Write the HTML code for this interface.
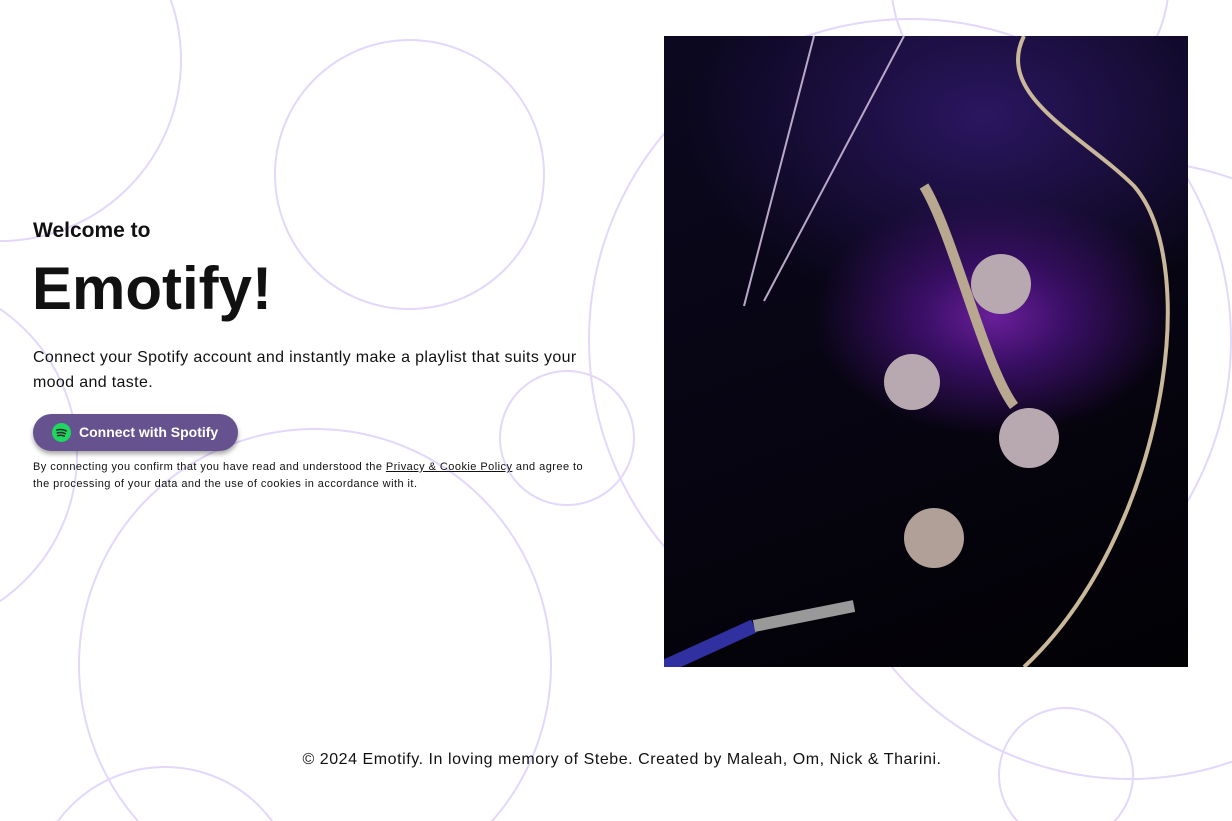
<!DOCTYPE html>
<html><head><meta charset="utf-8"><style>
html,body{margin:0;padding:0;width:1232px;height:821px;overflow:hidden;background:#fff;font-family:"Liberation Sans",sans-serif;color:#111;}
#w{position:relative;width:1232px;height:821px;overflow:hidden;}
.c{position:absolute;border:2px solid #e3d7fb;border-radius:50%;box-sizing:border-box;}
.abs{position:absolute;}
</style></head><body><div id="w">
<div class="c" style="left:-182px;top:-122px;width:364px;height:364px"></div>
<div class="c" style="left:274px;top:39px;width:271px;height:271px"></div>
<div class="c" style="left:499px;top:370px;width:136px;height:136px"></div>
<div class="c" style="left:78px;top:428px;width:474px;height:474px"></div>
<div class="c" style="left:-278px;top:277px;width:356px;height:356px"></div>
<div class="c" style="left:31px;top:766px;width:268px;height:268px"></div>
<div class="c" style="left:588px;top:18px;width:644px;height:644px"></div>
<div class="c" style="left:820px;top:160px;width:620px;height:620px"></div>
<div class="c" style="left:890px;top:-160px;width:280px;height:280px"></div>
<div class="c" style="left:998px;top:707px;width:136px;height:136px"></div>

<div class="abs" style="left:33px;top:219px;font-size:21px;font-weight:bold;">Welcome to</div>
<div class="abs" style="left:32px;top:254px;font-size:60px;font-weight:bold;">Emotify!</div>
<div class="abs" style="left:33px;top:345px;width:570px;font-size:16px;line-height:25px;letter-spacing:0.35px;">Connect your Spotify account and instantly make a playlist that suits your mood and taste.</div>
<div class="abs" style="left:33px;top:414px;width:205px;height:37px;border-radius:19px;background:#65528f;box-shadow:0 3px 5px rgba(0,0,0,.35);color:#fff;font-weight:bold;font-size:14px;line-height:37px;">
<svg style="position:absolute;left:19px;top:9px" width="19" height="19" viewBox="0 0 20 20"><circle cx="10" cy="10" r="10" fill="#1ed760"/><path d="M5 7.5q5-1.6 10 .8M5.5 10.5q4.5-1.3 8.5.7M6 13.3q3.7-1 7 .5" stroke="#2a2a2a" stroke-width="1.6" fill="none" stroke-linecap="round"/></svg>
<span style="position:absolute;left:46px">Connect with Spotify</span></div>
<div class="abs" style="left:33px;top:459px;width:565px;font-size:11px;line-height:16.5px;letter-spacing:0.45px;">By connecting you confirm that you have read and understood the <u>Privacy &amp; Cookie Policy</u> and agree to the processing of your data and the use of cookies in accordance with it.</div>

<div class="abs" style="left:664px;top:36px;width:524px;height:631px;background:radial-gradient(ellipse 180px 120px at 330px 280px,#6a1f9a 0%,#3a0f66 40%,transparent 100%),radial-gradient(ellipse 300px 200px at 320px 80px,#2a1660,transparent),linear-gradient(160deg,#0c0820 0%,#070512 50%,#020104 100%);overflow:hidden">
<svg width="524" height="631" style="position:absolute;left:0;top:0">
<path d="M360 0 C330 60 420 100 470 150 C540 230 500 500 360 631" stroke="#c9b89a" stroke-width="4" fill="none"/>
<path d="M150 0 L80 270" stroke="#b9a8c8" stroke-width="2" fill="none"/>
<path d="M240 0 L100 265" stroke="#b9a8c8" stroke-width="2"/>
<path d="M260 150 C290 200 320 330 350 370" stroke="#b8a890" stroke-width="10" fill="none"/>
<circle cx="248" cy="346" r="28" fill="#b8a8b0"/><circle cx="365" cy="402" r="30" fill="#b8a8b0"/><circle cx="337" cy="248" r="30" fill="#b8a8b0"/><circle cx="270" cy="502" r="30" fill="#b0a098"/>
<path d="M0 631 L90 590" stroke="#3030a0" stroke-width="14"/>
<path d="M90 590 L190 570" stroke="#999" stroke-width="12"/>
</svg></div>

<div class="abs" style="left:0;width:1244px;top:751px;text-align:center;font-size:16px;letter-spacing:0.55px;">© 2024 Emotify. In loving memory of Stebe. Created by Maleah, Om, Nick &amp; Tharini.</div>
</div></body></html>
